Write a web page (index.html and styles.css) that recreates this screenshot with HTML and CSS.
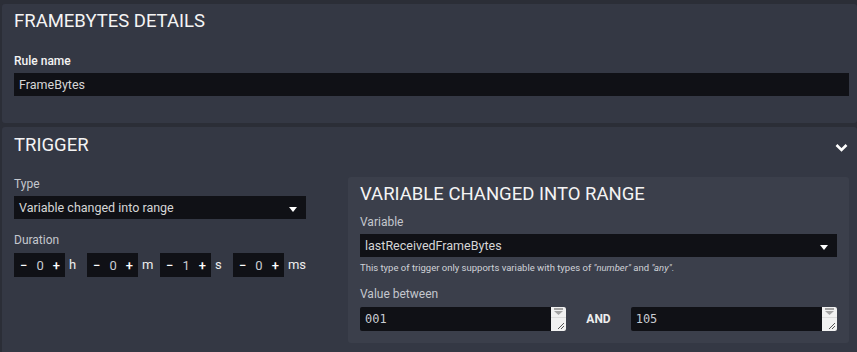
FILE: index.html
```html
<!DOCTYPE html>
<html lang="en">
  <head>
    <meta charset="UTF-8" />
    <meta name="viewport" content="width=device-width, initial-scale=1.0" />
    <link rel="stylesheet" href="styles.css">
  </head>
  <body>
    <div class="page">
      <div class="card">
        <h1>FrameBytes details</h1>
        <label class="label strong">Rule name</label>
        <div class="field">FrameBytes</div>
      </div>

      <div class="card">
        <div class="card-head">
          <h1>Trigger</h1>
          <svg class="chevron" width="13" height="9" viewBox="0 0 13 9">
            <polyline points="1.5,2 6.5,7 11.5,2" fill="none" stroke="#fff" stroke-width="2.6" />
          </svg>
        </div>

        <div class="columns">
          <div class="left">
            <label class="label">Type</label>
            <div class="field select">
              <span>Variable changed into range</span>
              <span class="caret"></span>
            </div>

            <label class="label duration-label">Duration</label>
            <div class="durations">
              <div class="duration">
                <div class="spinner"><span class="btn">&minus;</span><span class="num">0</span><span class="btn">+</span></div>
                <span class="unit">h</span>
              </div>
              <div class="duration">
                <div class="spinner"><span class="btn">&minus;</span><span class="num">0</span><span class="btn">+</span></div>
                <span class="unit">m</span>
              </div>
              <div class="duration">
                <div class="spinner"><span class="btn">&minus;</span><span class="num">1</span><span class="btn">+</span></div>
                <span class="unit">s</span>
              </div>
              <div class="duration">
                <div class="spinner"><span class="btn">&minus;</span><span class="num">0</span><span class="btn">+</span></div>
                <span class="unit">ms</span>
              </div>
            </div>
          </div>

          <div class="subcard">
            <h2>Variable changed into range</h2>
            <label class="label">Variable</label>
            <div class="field select">
              <span>lastReceivedFrameBytes</span>
              <span class="caret"></span>
            </div>
            <p class="help">This type of trigger only supports variable with types of <i>"number"</i> and <i>"any"</i>.</p>

            <label class="label range-label">Value between</label>
            <div class="range">
              <div class="textbox">
                <span class="value">001</span>
                <svg class="scroll" width="15" height="24" viewBox="0 0 15 24">
                  <rect width="15" height="24" fill="#f1f1f1" />
                  <rect x="3" y="1" width="9" height="2" fill="#a3a3a3" />
                  <polygon points="3,4 12,4 7.5,8" fill="#a3a3a3" />
                  <line x1="0" y1="10.5" x2="15" y2="10.5" stroke="#dcdcdc" />
                  <line x1="7" y1="22" x2="13" y2="16" stroke="#555" />
                  <line x1="10" y1="22" x2="13" y2="19" stroke="#555" />
                </svg>
              </div>
              <span class="and">AND</span>
              <div class="textbox">
                <span class="value">105</span>
                <svg class="scroll" width="15" height="24" viewBox="0 0 15 24">
                  <rect width="15" height="24" fill="#f1f1f1" />
                  <rect x="3" y="1" width="9" height="2" fill="#a3a3a3" />
                  <polygon points="3,4 12,4 7.5,8" fill="#a3a3a3" />
                  <line x1="0" y1="10.5" x2="15" y2="10.5" stroke="#dcdcdc" />
                  <line x1="7" y1="22" x2="13" y2="16" stroke="#555" />
                  <line x1="10" y1="22" x2="13" y2="19" stroke="#555" />
                </svg>
              </div>
            </div>
          </div>
        </div>
      </div>
    </div>
  </body>
</html>
```

FILE: styles.css
```css
* {
  margin: 0;
  padding: 0;
  box-sizing: border-box;
}
body {
  background: #2b2e37;
  font-family: Roboto, "Noto Sans", sans-serif;
  color: #f2f2f2;
  overflow: hidden;
}
.page {
  padding: 4px 0 0 2px;
}
.card {
  background: #343844;
  border-radius: 3px;
  padding: 7px 8px 27px 12px;
  margin-bottom: 4px;
}
h1 {
  font-size: 18.5px;
  line-height: 21px;
  font-weight: 400;
  text-transform: uppercase;
  color: #f4f4f4;
  margin-bottom: 22px;
}
.label {
  display: block;
  font-size: 12px;
  color: #c4c7ce;
  margin-bottom: 5px;
}
.label.strong {
  font-weight: 500;
  color: #f4f4f4;
}
.field {
  background: #101116;
  height: 23px;
  line-height: 23px;
  padding: 0 5px;
  font-size: 12.5px;
  color: #d6d6d6;
}
.select {
  display: flex;
  justify-content: space-between;
  align-items: center;
}
.caret {
  width: 0;
  height: 0;
  border-left: 4px solid transparent;
  border-right: 4px solid transparent;
  border-top: 5px solid #fff;
  margin-right: 4px;
  margin-top: 3px;
}
.card-head {
  display: flex;
  justify-content: space-between;
  align-items: flex-start;
  padding-top: 1px;
}
.card-head h1 {
  margin-bottom: 21px;
}
.chevron {
  margin-top: 8px;
  margin-right: 1px;
}
.columns {
  display: grid;
  grid-template-columns: 292px 1fr;
  column-gap: 42px;
  align-items: start;
}
.duration-label {
  margin-top: 14px;
  margin-bottom: 6px;
}
.durations {
  display: flex;
}
.duration {
  display: flex;
  width: 73px;
  align-items: flex-start;
}
.spinner {
  display: flex;
  align-items: center;
  justify-content: space-between;
  width: 51px;
  height: 24px;
  background: #101116;
  padding: 0 5px 0 6px;
  font-size: 13px;
}
.btn {
  color: #fff;
  font-weight: 500;
}
.num {
  color: #c9ccd2;
}
.unit {
  font-size: 13px;
  margin-left: 4px;
  padding-top: 4px;
  color: #eee;
}
.subcard {
  background: #3b3f4b;
  border-radius: 3px;
  padding: 7px 12px 12px;
}
h2 {
  font-size: 18.5px;
  line-height: 21px;
  font-weight: 400;
  text-transform: uppercase;
  color: #f4f4f4;
  margin-bottom: 10px;
}
.help {
  font-size: 9.5px;
  color: #cfd2d8;
  margin-top: 5px;
}
.range-label {
  margin-top: 14px;
  margin-bottom: 6px;
}
.range {
  display: flex;
  align-items: center;
  gap: 20px;
}
.textbox {
  flex: 1;
  display: flex;
  justify-content: space-between;
  background: #101116;
  border-radius: 2px;
  height: 24px;
  overflow: hidden;
}
.value {
  font-family: "DejaVu Sans Mono", monospace;
  font-size: 12px;
  line-height: 24px;
  padding-left: 5px;
  color: #c9ccd2;
}
.and {
  font-size: 12px;
  font-weight: 700;
  color: #eee;
}
```
